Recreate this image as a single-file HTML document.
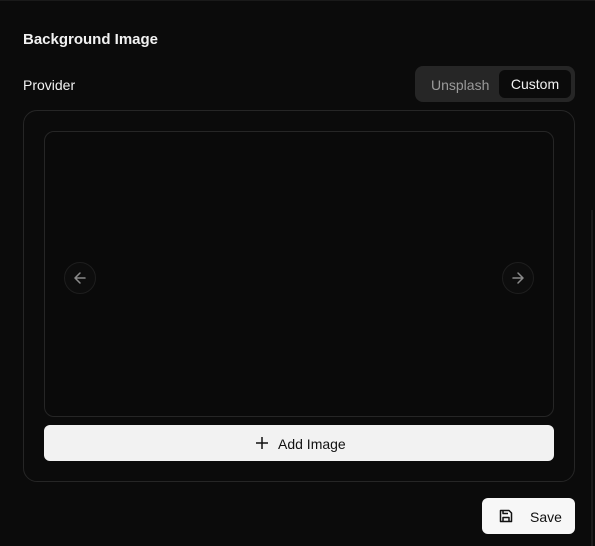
<!DOCTYPE html><html><head><style>
body{margin:0;width:595px;height:546px;background:#0b0b0b;font-family:"Liberation Sans",sans-serif;position:relative;overflow:hidden;color:#f2f2f2}
.a{position:absolute;box-sizing:border-box}
</style></head><body>
<div class="a" style="left:0;top:0;width:595px;height:1px;background:#1a1a1a"></div>
<div class="a" style="left:591px;top:210px;width:2px;height:336px;background:#1c1c1c"></div>
<div class="a" style="left:23px;top:31px;font-size:15px;font-weight:bold">Background Image</div>
<div class="a" style="left:23px;top:77px;font-size:14px">Provider</div>
<div class="a" style="left:415px;top:66px;width:160px;height:36px;background:#262626;border-radius:8px"></div>
<div class="a" style="left:431px;top:77px;font-size:14px;color:#9a9a9a">Unsplash</div>
<div class="a" style="left:499px;top:70px;width:72px;height:28px;background:#0b0b0b;border-radius:6px;font-size:14px;text-align:center;line-height:29px">Custom</div>
<div class="a" style="left:23px;top:110px;width:552px;height:372px;border:1px solid #262626;border-radius:14px"></div>
<div class="a" style="left:44px;top:131px;width:510px;height:286px;border:1px solid #262626;border-radius:10px;background:#0a0a0a"></div>
<div class="a" style="left:64px;top:262px;width:32px;height:32px;border:1px solid #1e1e1e;border-radius:50%;background:#0d0d0d"></div>
<svg class="a" style="left:72px;top:270px" width="16" height="16" viewBox="0 0 16 16" fill="none" stroke="#8a8a8a" stroke-width="1.5" stroke-linecap="round" stroke-linejoin="round"><path d="M13 8H3M8 3L3 8l5 5"/></svg>
<div class="a" style="left:502px;top:262px;width:32px;height:32px;border:1px solid #1e1e1e;border-radius:50%;background:#0d0d0d"></div>
<svg class="a" style="left:510px;top:270px" width="16" height="16" viewBox="0 0 16 16" fill="none" stroke="#8a8a8a" stroke-width="1.5" stroke-linecap="round" stroke-linejoin="round"><path d="M3 8h10M8 3l5 5-5 5"/></svg>
<div class="a" style="left:44px;top:425px;width:510px;height:36px;background:#f2f2f2;border-radius:6px"></div>
<svg class="a" style="left:255px;top:436px" width="14" height="14" viewBox="0 0 14 14" stroke="#111" stroke-width="1.5"><path d="M7 1v12M1 7h12"/></svg>
<div class="a" style="left:278px;top:436px;font-size:14px;color:#111">Add Image</div>
<div class="a" style="left:482px;top:498px;width:93px;height:36px;background:#f7f7f7;border-radius:6px"></div>
<svg class="a" style="left:498px;top:508px" width="16" height="16" viewBox="0 0 16 16" fill="none" stroke="#111" stroke-width="1.5" stroke-linejoin="round"><path d="M2.5 2.5h8.5l2.5 2.5v8.5h-11z"/><path d="M5 13.5V9.5h6v4M5 2.5v3h5"/></svg>
<div class="a" style="left:530px;top:509px;font-size:14px;color:#111">Save</div>
</body></html>
